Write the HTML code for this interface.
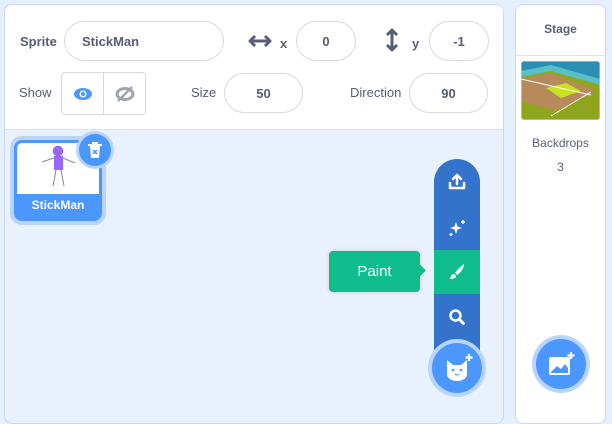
<!DOCTYPE html>
<html><head><style>
*{box-sizing:border-box;margin:0;padding:0}
body{width:612px;height:407px;background:#e5f0ff;font-family:"Liberation Sans",sans-serif;position:relative;overflow:hidden;color:#575e75}
.abs{position:absolute}
.pane{left:4px;top:4px;width:500px;height:420px;background:#e9f1fc;border:1px solid #cdd9ea;border-radius:8px;overflow:hidden}
.info{left:0;top:0;width:498px;height:125px;background:#fff;border-bottom:1px solid #d9e3f2}
.lbl{font-size:13px;color:#575e75}
.inp{border:1px solid #d9d9d9;border-radius:20px;height:40px;font-size:13px;font-weight:bold;color:#575e75;display:flex;align-items:center;justify-content:center;background:#fff}
.stage{left:515px;top:4px;width:91px;height:420px;background:#fff;border:1px solid #cdd9ea;border-radius:8px}
</style></head><body>
<div class="abs pane">
 <div class="abs info">
  <div class="abs lbl" style="left:15px;top:29px;font-weight:bold">Sprite</div>
  <div class="abs inp" style="left:59px;top:16px;width:160px;justify-content:flex-start;padding-left:17px">StickMan</div>
  <svg class="abs" style="left:243px;top:29px" width="24" height="14" viewBox="0 0 24 14"><path d="M2 7h20M7 2L2 7l5 5M17 2l5 5-5 5" stroke="#575e75" stroke-width="3" fill="none" stroke-linejoin="round"/></svg>
  <div class="abs lbl" style="left:275px;top:31px;font-weight:bold">x</div>
  <div class="abs inp" style="left:291px;top:16px;width:60px">0</div>
  <svg class="abs" style="left:380px;top:23px" width="14" height="24" viewBox="0 0 14 24"><path d="M7 2v20M2 7l5-5 5 5M2 17l5 5 5-5" stroke="#575e75" stroke-width="3" fill="none" stroke-linejoin="round"/></svg>
  <div class="abs lbl" style="left:407px;top:31px;font-weight:bold">y</div>
  <div class="abs inp" style="left:424px;top:16px;width:60px">-1</div>
  <div class="abs lbl" style="left:14px;top:80px">Show</div>
  <div class="abs" style="left:56px;top:67px;width:85px;height:43px;border:1px solid #d9d9d9;border-radius:4px;display:flex">
   <div style="width:42px;border-right:1px solid #d9d9d9;display:flex;align-items:center;justify-content:center"><svg width="20" height="14" viewBox="0 0 20 14"><ellipse cx="10" cy="7" rx="9" ry="6" fill="#4c97ff"/><circle cx="10" cy="7" r="3.5" fill="#fff"/><circle cx="10" cy="7" r="2" fill="#4c97ff"/></svg></div>
   <div style="flex:1;display:flex;align-items:center;justify-content:center"><svg width="20" height="18" viewBox="0 0 20 18"><ellipse cx="10" cy="9" rx="8" ry="5.5" fill="none" stroke="#a0a5b0" stroke-width="3"/><path d="M3 16L17 2" stroke="#a0a5b0" stroke-width="2.5"/></svg></div>
  </div>
  <div class="abs lbl" style="left:186px;top:80px">Size</div>
  <div class="abs inp" style="left:219px;top:68px;width:79px">50</div>
  <div class="abs lbl" style="left:345px;top:80px">Direction</div>
  <div class="abs inp" style="left:404px;top:68px;width:79px">90</div>
 </div>
 <div class="abs" style="left:5px;top:131px;width:96px;height:89px;border-radius:12px;background:#b8d4ff"></div>
 <div class="abs" style="left:9px;top:135px;width:88px;height:81px;border-radius:8px;background:#4c97ff;overflow:hidden">
  <div style="margin:3px;height:51px;background:#fff;border-radius:5px 5px 0 0;position:relative">
   <svg class="abs" style="left:24px;top:2px" width="40" height="44" viewBox="0 0 40 44"><circle cx="17" cy="6" r="5" fill="#9966ff" stroke="#774dcb" stroke-width=".5"/><rect x="13" y="11" width="9" height="14" fill="#9966ff"/><path d="M13 13L1 17M22 13l12 5M15 25l-3 16M20 25l3 16" stroke="#888" stroke-width="1"/></svg>
  </div>
  <div style="color:#fff;font-size:12px;font-weight:bold;text-align:center;margin-top:4px">StickMan</div>
 </div>
 <div class="abs" style="left:71px;top:126px;width:38px;height:38px;border-radius:50%;background:#b8d4ff"></div>
 <div class="abs" style="left:74px;top:129px;width:32px;height:32px;border-radius:50%;background:#4c97ff;display:flex;align-items:center;justify-content:center"><svg width="16" height="18" viewBox="0 0 16 18"><path d="M1 4h14M6 4V2h4v2" stroke="#fff" stroke-width="2" fill="none"/><path d="M3 5h10l-1 12H4z" fill="#fff"/><path d="M6 9l4 4M10 9l-4 4" stroke="#4c97ff" stroke-width="1.5"/></svg></div>
 <div class="abs" style="left:429px;top:154px;width:46px;height:210px;border-radius:23px 23px 0 0;background:#3373cc"></div>
 <div class="abs" style="left:429px;top:245px;width:46px;height:44px;background:#0fbd8c"></div>
 <svg class="abs" style="left:442px;top:167px" width="20" height="20" viewBox="0 0 20 20"><path d="M10 3v9M6 7l4-4 4 4M3 11v5h14v-5" stroke="#fff" stroke-width="2.5" fill="none" stroke-linecap="round" stroke-linejoin="round"/></svg>
 <svg class="abs" style="left:442px;top:213px" width="20" height="20" viewBox="0 0 20 20"><path d="M9 4l1.5 4.5L15 10l-4.5 1.5L9 16l-1.5-4.5L3 10l4.5-1.5z" fill="#fff"/><path d="M16 2v4M14 4h4M4 15v3M2.5 16.5h3" stroke="#fff" stroke-width="1.4"/></svg>
 <svg class="abs" style="left:442px;top:257px" width="20" height="20" viewBox="0 0 20 20"><path d="M17 2c-3 2-7 6-9 9l2 2c3-2 7-6 7-11z" fill="#fff"/><path d="M7 12c-3 0-3 3-4 5 3 0 6-1 6-3z" fill="#fff"/></svg>
 <svg class="abs" style="left:442px;top:302px" width="20" height="20" viewBox="0 0 20 20"><circle cx="8.5" cy="8.5" r="5" stroke="#fff" stroke-width="2.5" fill="none"/><path d="M12.5 12.5l4 4" stroke="#fff" stroke-width="3" stroke-linecap="round"/></svg>
 <div class="abs" style="left:423px;top:334px;width:58px;height:58px;border-radius:50%;background:#b8d4ff"></div>
 <div class="abs" style="left:427px;top:338px;width:50px;height:50px;border-radius:50%;background:#4c97ff"></div>
 <svg class="abs" style="left:438px;top:347px" width="32" height="32" viewBox="0 0 32 32"><path d="M4 8l6 5h8l6-5v14c0 4-4 7-10 7S4 26 4 22z" fill="#fff"/><circle cx="10" cy="18" r="1.3" fill="#4c97ff"/><circle cx="18" cy="18" r="1.3" fill="#4c97ff"/><path d="M12 22q2 2 4 0" stroke="#4c97ff" stroke-width="1" fill="none"/><path d="M26 2v7M22.5 5.5h7" stroke="#fff" stroke-width="2.2"/></svg>
 <div class="abs" style="left:324px;top:246px;width:91px;height:41px;border-radius:4px;background:#0fbd8c;color:#fff;font-size:15px;display:flex;align-items:center;justify-content:center;box-shadow:0 0 5px rgba(0,0,0,.15)">Paint</div>
 <div class="abs" style="left:410px;top:261px;width:9px;height:9px;background:#0fbd8c;transform:rotate(45deg)"></div>
</div>
<div class="abs stage">
 <div style="text-align:center;font-size:12px;font-weight:bold;margin-top:17px">Stage</div>
 <div style="position:absolute;left:0;right:0;top:50px;border-top:1px solid #d9e3f2"></div>
 <svg class="abs" style="left:5px;top:56px;border-radius:4px" width="79" height="59" viewBox="0 0 79 59"><rect width="79" height="59" fill="#8ea61e"/><path d="M0 0h79v22L30 8 0 12z" fill="#2a8fb3"/><path d="M0 10L30 4l49 14v6L30 10 0 16z" fill="#59c0c8"/><path d="M0 18l30-6 45 18-40 20L0 40z" fill="#b8895a"/><path d="M25 27l20-5 15 8-20 7z" fill="#c8e21e"/><path d="M0 18l70 16M30 55l40-24" stroke="#fff" stroke-width="1"/><rect width="79" height="59" fill="none" stroke="#ddd"/></svg>
 <div class="abs" style="left:0;width:89px;top:131px;text-align:center;font-size:12px">Backdrops</div>
 <div class="abs" style="left:0;width:89px;top:155px;text-align:center;font-size:12px">3</div>
 <div class="abs" style="left:16px;top:330px;width:58px;height:58px;border-radius:50%;background:#b8d4ff"></div>
 <div class="abs" style="left:20px;top:334px;width:50px;height:50px;border-radius:50%;background:#4c97ff"></div>
 <svg class="abs" style="left:31px;top:346px" width="30" height="28" viewBox="0 0 30 28"><rect x="2" y="6" width="21" height="18" rx="2" fill="#fff"/><path d="M4 21l6-6 4 3 4-5 3 4v5H4z" fill="#4c97ff"/><path d="M24 1v7M20.5 4.5h7" stroke="#fff" stroke-width="2.2"/></svg>
</div>
</body></html>
